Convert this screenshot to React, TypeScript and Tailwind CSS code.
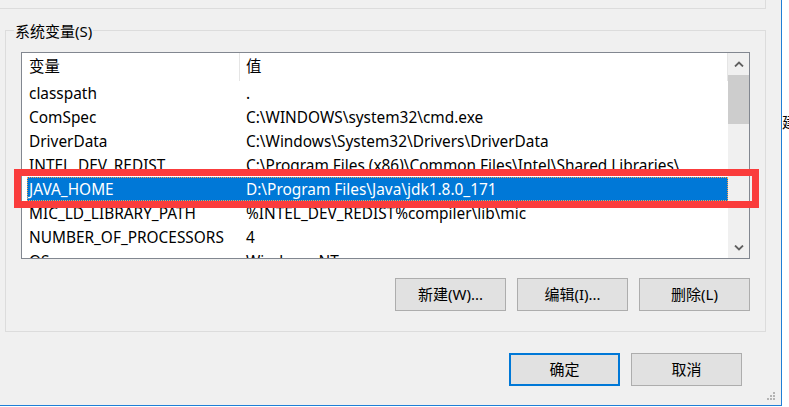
import React from "react";

const rows: [string, string][] = [
  ["classpath", "."],
  ["ComSpec", "C:\\WINDOWS\\system32\\cmd.exe"],
  ["DriverData", "C:\\Windows\\System32\\Drivers\\DriverData"],
  ["INTEL_DEV_REDIST", "C:\\Program Files (x86)\\Common Files\\Intel\\Shared Libraries\\"],
  ["JAVA_HOME", "D:\\Program Files\\Java\\jdk1.8.0_171"],
  ["MIC_LD_LIBRARY_PATH", "%INTEL_DEV_REDIST%compiler\\lib\\mic"],
  ["NUMBER_OF_PROCESSORS", "4"],
  ["OS", "Windows_NT"],
];

const SELECTED = 4;

function Chevron({ up }: { up?: boolean }) {
  return (
    <svg width="10" height="6" viewBox="0 0 10 6">
      <polyline
        points={up ? "1,5.5 5,1.5 9,5.5" : "1,0.5 5,4.5 9,0.5"}
        fill="none"
        stroke="#606060"
        strokeWidth="1.8"
      />
    </svg>
  );
}

function Button({ label, focused }: { label: string; focused?: boolean }) {
  return (
    <div
      className={`w-[111px] h-[33px] flex items-center justify-center bg-[#e1e1e1] text-[15px] text-black ${
        focused ? "border-2 border-[#0078d7]" : "border border-[#adadad]"
      }`}
    >
      {label}
    </div>
  );
}

export default function App() {
  return (
    <div className="w-[789px] h-[407px] flex bg-white overflow-hidden font-['Noto_Sans','Noto_Sans_CJK_SC',sans-serif] text-black">
      <div className="relative w-[782px] h-[406px] shrink-0 flex flex-col bg-[#f0f0f0] border-r border-b border-[#1f7ed6]">
        {/* previous group box */}
        <div className="h-[9px] w-[766px] border-r border-b border-[#dcdcdc]" />

        {/* system variables group */}
        <div className="relative mt-[21px] ml-[5px] w-[761px] h-[302px] border border-[#dcdcdc] pl-[15px] pt-[21px]">
          <span className="absolute left-[8px] top-[-10px] px-[1px] bg-[#f0f0f0] text-[15px] leading-[20px]">
            系统变量(S)
          </span>

          <div className="w-[729px] h-[207px] flex bg-white border border-[#828790]">
            <div className="flex-1 flex flex-col overflow-hidden">
              <div className="h-[28px] shrink-0 flex text-[15.4px]">
                <div className="w-[218px] pl-[7px] flex items-center border-r border-[#e5e5e5]">变量</div>
                <div className="flex-1 pl-[6px] flex items-center border-r border-[#e5e5e5]">值</div>
              </div>
              {rows.map(([name, value], i) => (
                <div key={name} className="h-[24px] shrink-0 flex pl-[5px] text-[15.4px]">
                  <div
                    className={`flex-1 flex items-center pt-[2px] border border-dotted ${
                      i === SELECTED ? "bg-[#0078d7] text-white border-[#f6a050]" : "border-transparent"
                    }`}
                  >
                    <div className="w-[211px] pl-[1px] whitespace-nowrap">{name}</div>
                    <div className="pl-[7px] whitespace-nowrap">{value}</div>
                  </div>
                </div>
              ))}
            </div>

            {/* scrollbar */}
            <div className="w-[21px] flex flex-col bg-[#f0f0f0]">
              <div className="h-[22px] flex items-center justify-center">
                <Chevron up />
              </div>
              <div className="h-[49px] bg-[#cdcdcd]" />
              <div className="flex-1" />
              <div className="h-[21px] flex items-center justify-center">
                <Chevron />
              </div>
            </div>
          </div>

          <div className="w-[729px] mt-[19px] flex justify-end gap-[11px]">
            <Button label="新建(W)..." />
            <Button label="编辑(I)..." />
            <Button label="删除(L)" />
          </div>
        </div>

        <div className="mt-[21px] pr-[39px] flex justify-end gap-[11px]">
          <Button label="确定" focused />
          <Button label="取消" />
        </div>

        {/* resize grip */}
        <svg className="absolute right-[5px] bottom-[4px]" width="9" height="9" viewBox="0 0 9 9">
          <g fill="#b4b4b4">
            <rect x="6" y="0" width="2" height="2" />
            <rect x="3" y="3" width="2" height="2" />
            <rect x="6" y="3" width="2" height="2" />
            <rect x="0" y="6" width="2" height="2" />
            <rect x="3" y="6" width="2" height="2" />
            <rect x="6" y="6" width="2" height="2" />
          </g>
        </svg>

        {/* highlight marker */}
        <div className="absolute left-[14px] top-[169px] w-[745px] h-[39px] border-[7px] border-[#fa3c3c]" />
      </div>

      <div className="flex-1 overflow-hidden pt-[112px] text-[15px] leading-[20px] whitespace-nowrap">建</div>
    </div>
  );
}
